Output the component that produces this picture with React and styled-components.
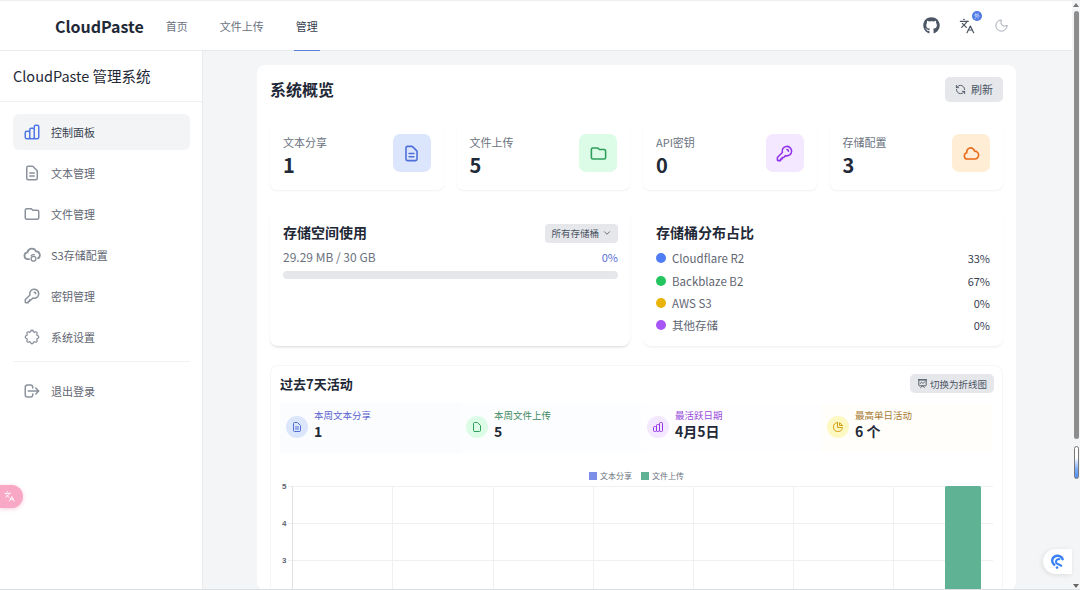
import React from 'react';
import styled, { createGlobalStyle } from 'styled-components';
import { ChevronDown, Languages, Moon, RefreshCcw } from 'lucide-react';
import { FaGithub } from 'react-icons/fa';
import {
  HiOutlineChartBar,
  HiOutlineChartPie,
  HiOutlineCloud,
  HiOutlineDocument,
  HiOutlineDocumentText,
  HiOutlineFolder,
  HiOutlineKey,
  HiOutlineLogout,
  HiOutlinePresentationChartLine,
} from 'react-icons/hi';

const GlobalStyle = createGlobalStyle`
  html, body {
    margin: 0;
    padding: 0;
    overflow: hidden;
  }
  body {
    font-family: "Noto Sans CJK SC", "Noto Sans", sans-serif;
    color: #1f2937;
  }
  * { box-sizing: border-box; }
`;

const Page = styled.div`
  position: relative;
  display: flex;
  width: 1080px;
  height: 590px;
  overflow: hidden;
  background: #f3f5f6;
  border-top: 1px solid #eceef0;
  border-bottom: 1px solid #dcdfe2;
`;

const Column = styled.div`
  flex: 1;
  min-width: 0;
  display: flex;
  flex-direction: column;
`;

const Header = styled.header`
  flex: none;
  height: 50px;
  display: flex;
  align-items: stretch;
  padding: 0 62px 0 55px;
  background: #fff;
  border-bottom: 1px solid #e7e9ec;
`;

const Logo = styled.div`
  font-size: 16px;
  font-weight: 700;
  line-height: 50px;
  color: #1f2937;
  margin-right: 20px;
`;

const Nav = styled.nav`
  display: flex;
  gap: 28px;
  flex: 1;
`;

const NavLink = styled.a`
  padding: 0 2px;
  font-size: 11px;
  line-height: 51px;
  height: 50px;
  color: ${({ $active }) => ($active ? '#374151' : '#6b7280')};
  border-bottom: 1px solid ${({ $active }) => ($active ? '#5b7fdc' : 'transparent')};
`;

const HeaderIcons = styled.div`
  display: flex;
  align-items: center;
  gap: 18px;
`;

const HeaderIcon = styled.span`
  position: relative;
  display: flex;
  width: 17px;
  justify-content: center;
  color: ${({ $color }) => $color || '#4b5563'};
`;

const Badge = styled.span`
  position: absolute;
  top: -7px;
  right: -7px;
  width: 10px;
  height: 10px;
  border-radius: 50%;
  background: #4f78e6;
  color: #dfe8ff;
  font-size: 6px;
  line-height: 10px;
  text-align: center;
`;

const Body = styled.div`
  flex: 1;
  min-height: 0;
  display: flex;
`;

const Sidebar = styled.aside`
  flex: none;
  width: 203px;
  background: #fff;
  border-right: 1px solid #e9ebed;
`;

const SidebarTitle = styled.div`
  height: 51px;
  padding-left: 13px;
  font-size: 14.5px;
  line-height: 49px;
  color: #1f2937;
  border-bottom: 1px solid #f0f1f3;
`;

const SideMenu = styled.nav`
  display: flex;
  flex-direction: column;
  gap: 5px;
  padding: 12px 12px 0 13px;
`;

const SideItem = styled.a`
  display: flex;
  align-items: center;
  gap: 10px;
  height: 36px;
  padding-left: 10px;
  border-radius: 6px;
  font-size: 11px;
  color: ${({ $active }) => ($active ? '#374151' : '#5f6672')};
  background: ${({ $active }) => ($active ? '#f3f4f6' : 'transparent')};

  svg {
    flex: none;
    width: 18px;
    height: 18px;
    color: ${({ $active }) => ($active ? '#4f78e6' : '#8b929c')};
  }
`;

const SideDivider = styled.div`
  height: 1px;
  margin: 1px 0 6px;
  background: #f0f1f3;
`;

const Main = styled.main`
  flex: 1;
  min-width: 0;
  overflow: hidden;
  padding: 14px 56px 0 54px;
`;

const Panel = styled.section`
  background: #fff;
  border-radius: 8px;
  padding: 11px 13px 0;
`;

const PanelHead = styled.div`
  display: flex;
  justify-content: space-between;
  align-items: center;
  height: 26px;
  margin-bottom: 20px;
`;

const PanelTitle = styled.h1`
  margin: 0;
  font-size: 16px;
  font-weight: 700;
  color: #1f2937;
`;

const GrayButton = styled.button`
  display: flex;
  align-items: center;
  gap: ${({ $small }) => ($small ? '2px' : '5px')};
  height: ${({ $small }) => ($small ? '19px' : '25px')};
  padding: 0 ${({ $small }) => ($small ? '7px' : '10px')};
  margin-right: ${({ $small }) => ($small ? '-1px' : '0')};
  border: 0;
  border-radius: 5px;
  background: #e5e7eb;
  color: #4b5563;
  font-family: inherit;
  font-size: ${({ $small }) => ($small ? '9.5px' : '11px')};
`;

const StatGrid = styled.div`
  display: grid;
  grid-template-columns: repeat(4, 1fr);
  gap: 13px;
  margin-bottom: 20px;
`;

const StatCard = styled.div`
  display: flex;
  justify-content: space-between;
  align-items: flex-start;
  height: 68px;
  padding: 12px 13px 0;
  border-radius: 7px;
  background: #fff;
  box-shadow: 0 1px 2px rgba(0, 0, 0, 0.06);
`;

const StatLabel = styled.div`
  font-size: 11px;
  line-height: 16px;
  color: #6b7280;
`;

const StatValue = styled.div`
  margin-top: 1px;
  font-size: 20px;
  font-weight: 700;
  line-height: 28px;
  color: #1f2937;
`;

const IconBox = styled.div`
  display: flex;
  align-items: center;
  justify-content: center;
  width: 38px;
  height: 38px;
  border-radius: 7px;
  background: ${({ $bg }) => $bg};
  color: ${({ $color }) => $color};

  svg {
    width: 19px;
    height: 19px;
  }
`;

const TwoCols = styled.div`
  display: grid;
  grid-template-columns: 1fr 1fr;
  gap: 13px;
  margin-bottom: 19px;
`;

const InfoCard = styled.div`
  height: 136px;
  padding: 12px ${({ $strong }) => ($strong ? '12px' : '13px')} 13px 13px;
  border-radius: 8px;
  background: #fff;
  box-shadow: 0 2px 3px -1px rgba(0, 0, 0, ${({ $strong }) => ($strong ? 0.16 : 0.08)});
`;

const InfoHead = styled.div`
  display: flex;
  justify-content: space-between;
  align-items: center;
  height: 20px;
  margin-bottom: 5px;
`;

const InfoTitle = styled.h2`
  margin: 0;
  font-size: 14px;
  font-weight: 700;
  color: #1f2937;
`;

const Chip = styled.div`
  display: flex;
  align-items: center;
  gap: 3px;
  height: 19px;
  margin-top: 2px;
  padding: 0 6px;
  border-radius: 4px;
  background: #e5e7eb;
  color: #4b5563;
  font-size: 9.5px;
`;

const UsageRow = styled.div`
  display: flex;
  justify-content: space-between;
  font-size: 12px;
  line-height: 20px;
  color: #6b7280;
  margin-bottom: 4px;
`;

const UsagePercent = styled.span`
  font-size: 11px;
  color: #5a6fd8;
`;

const Track = styled.div`
  height: 8px;
  border-radius: 4px;
  background: #e5e7eb;
`;

const LegendRow = styled.div`
  display: flex;
  align-items: center;
  height: 22.4px;
  font-size: 11.5px;
  color: #5f6672;
`;

const Dot = styled.span`
  flex: none;
  width: 10px;
  height: 10px;
  margin-right: 6px;
  border-radius: 50%;
  background: ${({ $color }) => $color};
`;

const LegendValue = styled.span`
  margin-left: auto;
  font-size: 11px;
  color: #374151;
`;

const ActivityCard = styled.div`
  padding: 8px 9px 0;
  border: 1px solid #f5f6f7;
  border-bottom: 0;
  border-radius: 8px 8px 0 0;
  background: #fff;
`;

const ActivityHead = styled.div`
  display: flex;
  justify-content: space-between;
  align-items: center;
  height: 19px;
  margin-bottom: 10px;
`;

const ActivityTitle = styled.h3`
  margin: 0;
  font-size: 13px;
  font-weight: 700;
  color: #1f2937;
`;

const WeekGrid = styled.div`
  display: grid;
  grid-template-columns: 180px 181px 180px 1fr;
  height: 50px;
  margin-bottom: 16px;
`;

const WeekTile = styled.div`
  display: flex;
  align-items: flex-start;
  gap: 6px;
  padding: 5px 0 0 6px;
  background: ${({ $tint }) => $tint};
`;

const WeekCircle = styled.div`
  flex: none;
  display: flex;
  align-items: center;
  justify-content: center;
  width: 22px;
  height: 22px;
  margin-top: 8px;
  border-radius: 50%;
  background: ${({ $bg }) => $bg};
  color: ${({ $color }) => $color};

  svg {
    width: 12px;
    height: 12px;
  }
`;

const WeekLabel = styled.div`
  font-size: 9.5px;
  line-height: 14px;
  color: ${({ $color }) => $color};
`;

const WeekValue = styled.div`
  font-size: 14px;
  font-weight: 700;
  line-height: 19px;
  color: #1f2937;
`;

const ChartLegend = styled.div`
  display: flex;
  justify-content: center;
  gap: 9px;
  height: 14px;
  font-size: 8px;
  line-height: 14px;
  color: #6b7280;
`;

const LegendKey = styled.span`
  display: flex;
  align-items: center;
  gap: 3px;

  &::before {
    content: '';
    width: 8px;
    height: 8px;
    background: ${({ $color }) => $color};
  }
`;

const Chart = styled.svg`
  display: block;
  margin-top: -3px;
`;

const ScrollTrack = styled.div`
  flex: none;
  width: 8px;
  display: flex;
  flex-direction: column;
  align-items: center;
  padding-top: 2px;
  background: #f4f5f6;
`;

const ArrowUp = styled.span`
  width: 0;
  height: 0;
  margin-bottom: 4px;
  border: 3px solid transparent;
  border-top: 0;
  border-bottom: 4px solid #777;
`;

const ArrowDown = styled.span`
  width: 0;
  height: 0;
  margin-top: auto;
  margin-bottom: 1px;
  border: 3px solid transparent;
  border-bottom: 0;
  border-top: 4px solid #666;
`;

const ScrollThumb = styled.div`
  width: 5px;
  height: 428px;
  border-radius: 3px;
  background: #8d8d8d;
`;

const MiniThumb = styled.div`
  position: absolute;
  top: 445px;
  left: 1074px;
  width: 5px;
  height: 33px;
  border: 1px solid #777;
  border-radius: 3px;
  background: linear-gradient(#fff 35%, #7eaef8 70%, #4f8df5);
`;

const PinkTab = styled.div`
  position: absolute;
  top: 484px;
  left: 0;
  display: flex;
  align-items: center;
  justify-content: center;
  width: 23px;
  height: 23px;
  padding-right: 5px;
  border-radius: 0 12px 12px 0;
  background: #f8a8c4;
  color: #fff;
  box-shadow: 0 1px 4px rgba(240, 130, 170, 0.4);
`;

const FloatLogo = styled.div`
  position: absolute;
  top: 548px;
  left: 1043px;
  display: flex;
  align-items: center;
  padding-left: 7px;
  width: 29px;
  height: 25px;
  border-radius: 13px 0 0 13px;
  background: #fff;
  box-shadow: -1px 1px 5px rgba(0, 0, 0, 0.1);
`;

function CogOutline() {
  return (
    <svg viewBox="0 0 24 24" fill="none" stroke="currentColor" strokeWidth="1.7" strokeLinejoin="round">
      <path d="M10.325 4.317c.426-1.756 2.924-1.756 3.35 0a1.724 1.724 0 002.573 1.066c1.543-.94 3.31.826 2.37 2.37a1.724 1.724 0 001.065 2.572c1.756.426 1.756 2.924 0 3.35a1.724 1.724 0 00-1.066 2.573c.94 1.543-.826 3.31-2.37 2.37a1.724 1.724 0 00-2.572 1.065c-.426 1.756-2.924 1.756-3.35 0a1.724 1.724 0 00-2.573-1.066c-1.543.94-3.31-.826-2.37-2.37a1.724 1.724 0 00-1.065-2.572c-1.756-.426-1.756-2.924 0-3.35a1.724 1.724 0 001.066-2.573c-.94-1.543.826-3.31 2.37-2.37.996.608 2.296.07 2.572-1.065z" />
    </svg>
  );
}

function CloudGear() {
  return (
    <svg viewBox="0 0 24 24" fill="none" stroke="currentColor" strokeWidth="2.4" strokeLinecap="round">
      <path d="M8 17.5H6.5a4.5 4.5 0 01-.6-8.96A6 6 0 0117.4 7.2 5 5 0 0120 16.5" />
      <circle cx="14" cy="17" r="3.2" strokeWidth="1.8" />
      <path d="M11 13c1-1.4 2.6-1.8 4-1.4" strokeWidth="1.8" />
    </svg>
  );
}

const stats = [
  { label: '文本分享', value: 1, bg: '#dbe6fd', color: '#4f6fd8', Icon: HiOutlineDocumentText },
  { label: '文件上传', value: 5, bg: '#dcfce7', color: '#2f9e5b', Icon: HiOutlineFolder },
  { label: 'API密钥', value: 0, bg: '#f3e8ff', color: '#9333ea', Icon: HiOutlineKey },
  { label: '存储配置', value: 3, bg: '#ffedd5', color: '#ea6a1a', Icon: HiOutlineCloud },
];

const buckets = [
  { name: 'Cloudflare R2', value: '33%', color: '#4f7df5' },
  { name: 'Backblaze B2', value: '67%', color: '#22c55e' },
  { name: 'AWS S3', value: '0%', color: '#eab308' },
  { name: '其他存储', value: '0%', color: '#a855f7' },
];

const week = [
  { label: '本周文本分享', value: '1', tint: '#fbfcfe', bg: '#dbe6fb', color: '#4f6fd8', text: '#5a63cf', Icon: HiOutlineDocumentText },
  { label: '本周文件上传', value: '5', tint: '#fcfdfe', bg: '#dcfce7', color: '#2f9e5b', text: '#3f8a5f', Icon: HiOutlineDocument },
  { label: '最活跃日期', value: '4月5日', tint: '#fefdff', bg: '#f3e8ff', color: '#9333ea', text: '#9a4fdc', Icon: HiOutlineChartBar },
  { label: '最高单日活动', value: '6 个', tint: '#fffefb', bg: '#fef9c3', color: '#d4a017', text: '#a87b35', Icon: HiOutlineChartPie },
];

const gridX = [112, 213, 313, 413, 513, 613, 713];

export default function App() {
  return (
    <>
      <GlobalStyle />
      <Page>
        <Column>
          <Header>
            <Logo>CloudPaste</Logo>
            <Nav>
              <NavLink>首页</NavLink>
              <NavLink>文件上传</NavLink>
              <NavLink $active>管理</NavLink>
            </Nav>
            <HeaderIcons>
              <HeaderIcon><FaGithub size={17} /></HeaderIcon>
              <HeaderIcon>
                <Languages size={16} strokeWidth={1.8} />
                <Badge>外</Badge>
              </HeaderIcon>
              <HeaderIcon $color="#9ca3af"><Moon size={15} strokeWidth={1.5} /></HeaderIcon>
            </HeaderIcons>
          </Header>
          <Body>
            <Sidebar>
              <SidebarTitle>CloudPaste 管理系统</SidebarTitle>
              <SideMenu>
                <SideItem $active><HiOutlineChartBar />控制面板</SideItem>
                <SideItem><HiOutlineDocumentText />文本管理</SideItem>
                <SideItem><HiOutlineFolder />文件管理</SideItem>
                <SideItem><CloudGear />S3存储配置</SideItem>
                <SideItem><HiOutlineKey />密钥管理</SideItem>
                <SideItem><CogOutline />系统设置</SideItem>
                <SideDivider />
                <SideItem><HiOutlineLogout />退出登录</SideItem>
              </SideMenu>
            </Sidebar>
            <Main>
              <Panel>
                <PanelHead>
                  <PanelTitle>系统概览</PanelTitle>
                  <GrayButton><RefreshCcw size={11} strokeWidth={2} />刷新</GrayButton>
                </PanelHead>
                <StatGrid>
                  {stats.map(({ label, value, bg, color, Icon }) => (
                    <StatCard key={label}>
                      <div>
                        <StatLabel>{label}</StatLabel>
                        <StatValue>{value}</StatValue>
                      </div>
                      <IconBox $bg={bg} $color={color}><Icon /></IconBox>
                    </StatCard>
                  ))}
                </StatGrid>
                <TwoCols>
                  <InfoCard $strong>
                    <InfoHead>
                      <InfoTitle>存储空间使用</InfoTitle>
                      <Chip>所有存储桶<ChevronDown size={10} /></Chip>
                    </InfoHead>
                    <UsageRow>
                      <span>29.29 MB / 30 GB</span>
                      <UsagePercent>0%</UsagePercent>
                    </UsageRow>
                    <Track />
                  </InfoCard>
                  <InfoCard>
                    <InfoHead>
                      <InfoTitle>存储桶分布占比</InfoTitle>
                    </InfoHead>
                    {buckets.map((b) => (
                      <LegendRow key={b.name}>
                        <Dot $color={b.color} />
                        {b.name}
                        <LegendValue>{b.value}</LegendValue>
                      </LegendRow>
                    ))}
                  </InfoCard>
                </TwoCols>
                <ActivityCard>
                  <ActivityHead>
                    <ActivityTitle>过去7天活动</ActivityTitle>
                    <GrayButton $small><HiOutlinePresentationChartLine size={11} />切换为折线图</GrayButton>
                  </ActivityHead>
                  <WeekGrid>
                    {week.map(({ label, value, tint, bg, color, text, Icon }) => (
                      <WeekTile key={label} $tint={tint}>
                        <WeekCircle $bg={bg} $color={color}><Icon /></WeekCircle>
                        <div>
                          <WeekLabel $color={text}>{label}</WeekLabel>
                          <WeekValue>{value}</WeekValue>
                        </div>
                      </WeekTile>
                    ))}
                  </WeekGrid>
                  <ChartLegend>
                    <LegendKey $color="#7b8fe8">文本分享</LegendKey>
                    <LegendKey $color="#5fb394">文件上传</LegendKey>
                  </ChartLegend>
                  <Chart width="713" height="110" viewBox="0 0 713 110">
                    {[6, 43, 80].map((y, i) => (
                      <g key={y}>
                        <line x1="8" x2="713" y1={y + 0.5} y2={y + 0.5} stroke="#eff0f2" />
                        <text x="2" y={y + 3} fontSize="8" fontWeight="700" fill="#5f6672" fontFamily="Liberation Sans, sans-serif">{5 - i}</text>
                      </g>
                    ))}
                    <line x1="12.5" x2="12.5" y1="6" y2="110" stroke="#dfe1e4" />
                    {gridX.map((x) => (
                      <line key={x} x1={x + 0.5} x2={x + 0.5} y1="6" y2="110" stroke="#eff0f2" />
                    ))}
                    <rect x="665" y="6" width="36" height="106" rx="1.5" fill="#5fb394" />
                  </Chart>
                </ActivityCard>
              </Panel>
            </Main>
          </Body>
        </Column>
        <ScrollTrack>
          <ArrowUp />
          <ScrollThumb />
          <ArrowDown />
        </ScrollTrack>
        <MiniThumb />
        <PinkTab><Languages size={11} strokeWidth={2} /></PinkTab>
        <FloatLogo>
          <svg width="15" height="15" viewBox="0 0 16 16" fill="none">
            <path d="M13.5 5.5A6 6 0 0 0 3 4.5a6 6 0 0 0 1.5 7" stroke="#3b82f6" strokeWidth="2.6" strokeLinecap="round" />
            <path d="M10 5.5a3 3 0 0 0-3.6 2.4A3 3 0 0 0 9 11l3 1.5" stroke="#3b82f6" strokeWidth="2.2" strokeLinecap="round" />
            <circle cx="7.5" cy="14.5" r="1.4" fill="#3b82f6" />
          </svg>
        </FloatLogo>
      </Page>
    </>
  );
}
